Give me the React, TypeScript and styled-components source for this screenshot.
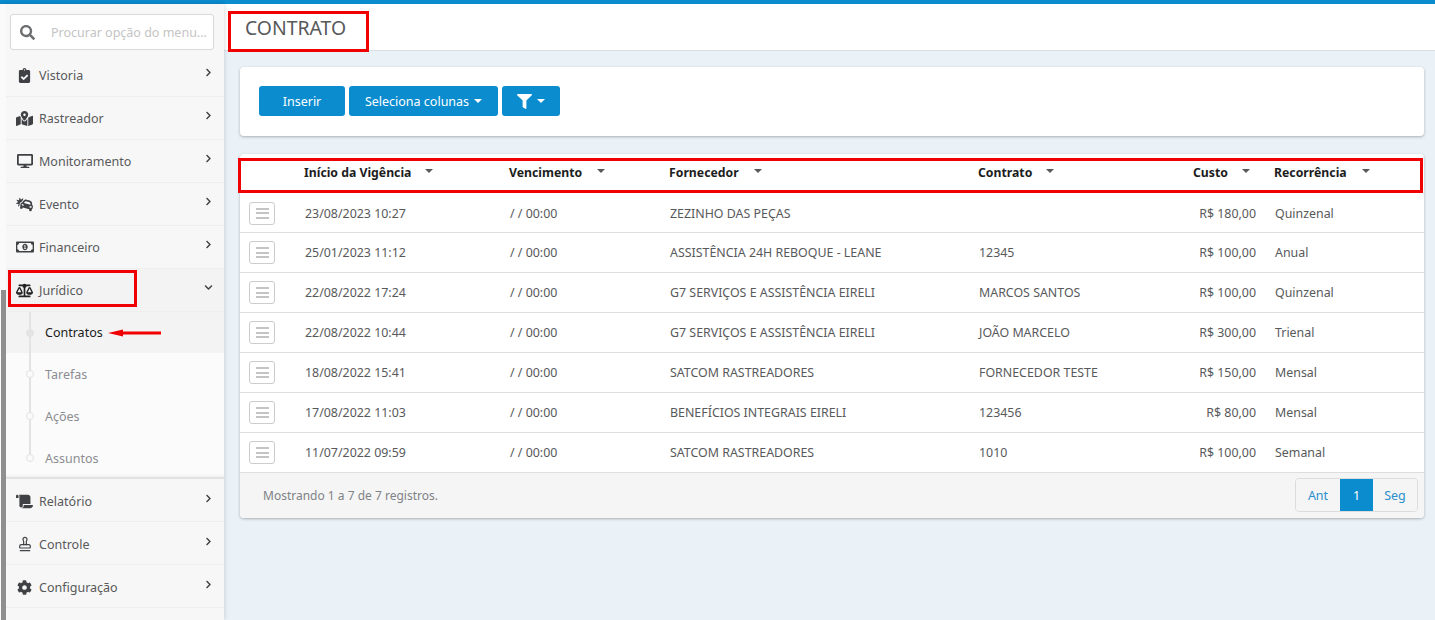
import styled, { createGlobalStyle } from "styled-components";
import { Stamp } from "lucide-react";
import {
    FaBalanceScale,
    FaCarCrash,
    FaChevronDown,
    FaChevronRight,
    FaClipboardCheck,
    FaCog,
    FaDesktop,
    FaFilter,
    FaMapMarkedAlt,
    FaRegMoneyBillAlt,
    FaScroll,
    FaSearch,
} from "react-icons/fa";
import type { ReactNode } from "react";

const GlobalStyle = createGlobalStyle`
    html, body {
        margin: 0;
        height: 100%;
        overflow: hidden;
        background: #eaf2f8;
    }
    * {
        box-sizing: border-box;
    }
    body {
        font-family: "Noto Sans", "Open Sans", sans-serif;
        font-size: 12px;
        color: #58595b;
    }
`;

const rows = [
    ["23/08/2023 10:27", "/ / 00:00", "ZEZINHO DAS PEÇAS", "", "R$ 180,00", "Quinzenal"],
    ["25/01/2023 11:12", "/ / 00:00", "ASSISTÊNCIA 24H REBOQUE - LEANE", "12345", "R$ 100,00", "Anual"],
    ["22/08/2022 17:24", "/ / 00:00", "G7 SERVIÇOS E ASSISTÊNCIA EIRELI", "MARCOS SANTOS", "R$ 100,00", "Quinzenal"],
    ["22/08/2022 10:44", "/ / 00:00", "G7 SERVIÇOS E ASSISTÊNCIA EIRELI", "JOÃO MARCELO", "R$ 300,00", "Trienal"],
    ["18/08/2022 15:41", "/ / 00:00", "SATCOM RASTREADORES", "FORNECEDOR TESTE", "R$ 150,00", "Mensal"],
    ["17/08/2022 11:03", "/ / 00:00", "BENEFÍCIOS INTEGRAIS EIRELI", "123456", "R$ 80,00", "Mensal"],
    ["11/07/2022 09:59", "/ / 00:00", "SATCOM RASTREADORES", "1010", "R$ 100,00", "Semanal"],
];

const topItems: [string, ReactNode][] = [
    ["Vistoria", <FaClipboardCheck size={15} />],
    ["Rastreador", <FaMapMarkedAlt size={17} />],
    ["Monitoramento", <FaDesktop size={16} />],
    ["Evento", <FaCarCrash size={17} />],
    ["Financeiro", <FaRegMoneyBillAlt size={18} />],
];

const bottomItems: [string, ReactNode][] = [
    ["Relatório", <FaScroll size={17} />],
    ["Controle", <Stamp size={16} strokeWidth={1.8} />],
    ["Configuração", <FaCog size={15} />],
];

const subItems = ["Contratos", "Tarefas", "Ações", "Assuntos"];

const heads: { label: string; caret: number; inset?: number }[] = [
    { label: "Início da Vigência", caret: 121 },
    { label: "Vencimento", caret: 88 },
    { label: "Fornecedor", caret: 85 },
    { label: "Contrato", caret: 68 },
    { label: "Custo", caret: 92, inset: 43 },
    { label: "Recorrência", caret: 88 },
];

export default function App() {
    return (
        <Page>
            <GlobalStyle />
            <TopLine />
            <Body>
                <Sidebar>
                    <ScrollTrack>
                        <ScrollThumb />
                    </ScrollTrack>
                    <SideInner>
                        <SearchWrap>
                            <SearchBox>
                                <FaSearch size={15} color="#6d6e70" />
                                <span>Procurar opção do menu...</span>
                            </SearchBox>
                        </SearchWrap>
                        {topItems.map(([label, icon]) => (
                            <MenuItem key={label}>
                                <MenuIcon>{icon}</MenuIcon>
                                <MenuLabel>{label}</MenuLabel>
                                <Chevron><FaChevronRight size={9} /></Chevron>
                            </MenuItem>
                        ))}
                        <MenuItem $open>
                            <MenuIcon><FaBalanceScale size={17} color="#222" /></MenuIcon>
                            <MenuLabel>Jurídico</MenuLabel>
                            <Chevron><FaChevronDown size={9} /></Chevron>
                            <RedBox $w={129} $h={37} $l={2} $t={1} />
                        </MenuItem>
                        <SubMenu>
                            <SubLine />
                            {subItems.map((label, i) => (
                                <SubItem key={label} $active={i === 0}>
                                    <SubDot $active={i === 0} />
                                    {label}
                                    {i === 0 && (
                                        <ArrowMark width="54" height="8" viewBox="0 0 54 8">
                                            <path d="M0 4 L15 0.5 L15 2.5 L53 2.5 L53 5.5 L15 5.5 L15 7.5 Z" fill="#f00000" />
                                        </ArrowMark>
                                    )}
                                </SubItem>
                            ))}
                        </SubMenu>
                        {bottomItems.map(([label, icon]) => (
                            <MenuItem key={label} $low>
                                <MenuIcon>{icon}</MenuIcon>
                                <MenuLabel>{label}</MenuLabel>
                                <Chevron><FaChevronRight size={9} /></Chevron>
                            </MenuItem>
                        ))}
                    </SideInner>
                </Sidebar>
                <Main>
                    <Header>
                        <Title>CONTRATO</Title>
                        <RedBox $w={141} $h={41} $l={4} $t={7} />
                    </Header>
                    <Content>
                        <ToolCard>
                            <Button $w={86}>Inserir</Button>
                            <Button $w={149}>Seleciona colunas <Caret /></Button>
                            <Button $w={58}><FaFilter size={15} /> <Caret /></Button>
                        </ToolCard>
                        <TableCard>
                            <HeadRow>
                                <span />
                                {heads.map((h) => (
                                    <HeadCell key={h.label} $inset={h.inset}>
                                        {h.label}
                                        <HeadCaret $l={h.caret} />
                                    </HeadCell>
                                ))}
                                <RedBox $w={1185} $h={35} $l={-2} $t={4} />
                            </HeadRow>
                            {rows.map((r, i) => (
                                <DataRow key={i} $first={i === 0}>
                                    <MenuCell>
                                        <RowMenu><RowBars /></RowMenu>
                                    </MenuCell>
                                    <Cell>{r[0]}</Cell>
                                    <Cell>{r[1]}</Cell>
                                    <Cell>{r[2]}</Cell>
                                    <Cell>{r[3]}</Cell>
                                    <Cell $right>{r[4]}</Cell>
                                    <Cell $pad>{r[5]}</Cell>
                                </DataRow>
                            ))}
                            <Footer>
                                <span>Mostrando 1 a 7 de 7 registros.</span>
                                <Pager>
                                    <PageLink $w={44}>Ant</PageLink>
                                    <PageLink $w={33} $active>1</PageLink>
                                    <PageLink $w={44}>Seg</PageLink>
                                </Pager>
                            </Footer>
                        </TableCard>
                    </Content>
                </Main>
            </Body>
        </Page>
    );
}

const Page = styled.div`
    width: 1435px;
    height: 620px;
    display: flex;
    flex-direction: column;
    overflow: hidden;
`;

const TopLine = styled.div`
    height: 4px;
    flex: none;
    background: #0a8ccf;
`;

const Body = styled.div`
    flex: 1;
    display: flex;
    min-height: 0;
`;

const Sidebar = styled.aside`
    width: 224px;
    flex: none;
    display: flex;
    background: #f7f7f7;
    box-shadow: 0 0 5px rgba(0, 0, 0, 0.18);
    z-index: 1;
`;

const ScrollTrack = styled.div`
    width: 6px;
    flex: none;
    display: flex;
    flex-direction: column;
    justify-content: flex-end;
    padding-left: 1px;
    background: #fafafa;
`;

const ScrollThumb = styled.div`
    width: 5px;
    height: 330px;
    background: #8f8f8f;
`;

const SideInner = styled.div`
    flex: 1;
    min-width: 0;
`;

const SearchWrap = styled.div`
    height: 50px;
    padding: 10px 10px 0 4px;
    background: #f7f7f7;
`;

const SearchBox = styled.div`
    height: 36px;
    display: flex;
    align-items: center;
    gap: 16px;
    padding: 0 0 0 9px;
    background: #fff;
    border: 1px solid #d9d9d9;
    border-radius: 3px;
    color: #c4c4c4;
    font-size: 12.5px;
    white-space: nowrap;
    overflow: hidden;

    svg {
        flex: none;
    }
`;

const MenuItem = styled.div<{ $open?: boolean; $low?: boolean }>`
    position: relative;
    height: 43px;
    display: flex;
    align-items: center;
    padding: ${(p) => (p.$low ? "2px" : "0")} 10px 0 7px;
    border-bottom: 1px solid #efefef;
    background: ${(p) => (p.$open ? "#f3f3f3" : "#f7f7f7")};
`;

const MenuIcon = styled.span`
    width: 23px;
    display: flex;
    justify-content: center;
    color: #3f4144;
    margin-right: 3px;
`;

const MenuLabel = styled.span`
    flex: 1;
    font-size: 12.5px;
    color: #58595b;
`;

const Chevron = styled.span`
    display: flex;
    color: #3f4144;
    margin: 0 1px 6px 0;
`;

const SubMenu = styled.div`
    position: relative;
    height: 167px;
    background: #fbfbfb;
    border-bottom: 2px solid #e2e2e2;
    box-shadow: inset 0 -3px 3px -2px rgba(0, 0, 0, 0.06);
`;

const SubLine = styled.div`
    position: absolute;
    left: 23px;
    top: 0;
    bottom: 20px;
    width: 2px;
    background: #e3e3e3;
    z-index: 1;
`;

const SubItem = styled.div<{ $active?: boolean }>`
    position: relative;
    height: ${(p) => (p.$active ? "41px" : "42px")};
    display: flex;
    align-items: center;
    padding-left: 39px;
    font-size: 12.5px;
    color: ${(p) => (p.$active ? "#1c1c1c" : "#8b8d91")};
    background: ${(p) => (p.$active ? "#f3f3f3" : "transparent")};
`;

const SubDot = styled.span<{ $active?: boolean }>`
    position: absolute;
    left: 20px;
    top: 17px;
    width: 8px;
    height: 8px;
    border-radius: 50%;
    border: 1px solid #e3e3e3;
    background: ${(p) => (p.$active ? "#e3e3e3" : "#fbfbfb")};
    z-index: 2;
`;

const ArrowMark = styled.svg`
    position: absolute;
    left: 102px;
    top: 17px;
`;

const RedBox = styled.div<{ $w: number; $h: number; $l: number; $t: number }>`
    position: absolute;
    left: ${(p) => p.$l}px;
    top: ${(p) => p.$t}px;
    width: ${(p) => p.$w}px;
    height: ${(p) => p.$h}px;
    border: 3px solid #f00000;
    pointer-events: none;
`;

const Main = styled.main`
    flex: 1;
    min-width: 0;
`;

const Header = styled.header`
    position: relative;
    height: 47px;
    display: flex;
    align-items: center;
    padding: 0 0 0 21px;
    background: #fff;
    border-bottom: 1px solid #dcdfe2;
`;

const Title = styled.h1`
    margin: 0;
    font-size: 19.4px;
    font-weight: 400;
    color: #58595b;
`;

const Content = styled.div`
    padding: 16px 11px 0 16px;
`;

const ToolCard = styled.section`
    height: 69px;
    display: flex;
    align-items: center;
    gap: 4px;
    padding: 0 19px 1px;
    background: #fff;
    border-radius: 4px;
    box-shadow: 0 1px 3px rgba(0, 0, 0, 0.28);
`;

const Button = styled.button<{ $w: number }>`
    width: ${(p) => p.$w}px;
    height: 30px;
    display: flex;
    align-items: center;
    justify-content: center;
    gap: 5px;
    border: 0;
    border-radius: 3px;
    background: #0a8ccf;
    color: #fff;
    font: inherit;
    font-size: 12.5px;
`;

const Caret = styled.span`
    width: 0;
    height: 0;
    border-left: 4px solid transparent;
    border-right: 4px solid transparent;
    border-top: 4px solid #fff;
`;

const TableCard = styled.section`
    margin-top: 18px;
    background: #fff;
    border-radius: 4px;
    box-shadow: 0 1px 3px rgba(0, 0, 0, 0.28);
`;

const HeadRow = styled.div`
    position: relative;
    height: 40px;
    display: grid;
    grid-template-columns: 64px 205px 160px 309px 172px 124px 1fr;
    align-items: center;
`;

const HeadCell = styled.div<{ $inset?: number }>`
    position: relative;
    padding-left: ${(p) => p.$inset ?? 0}px;
    padding-bottom: 4px;
    font-size: 12.25px;
    font-weight: 700;
    color: #1d1d1d;
    white-space: nowrap;
`;

const HeadCaret = styled.span<{ $l: number }>`
    position: absolute;
    left: ${(p) => p.$l}px;
    top: 5px;
    width: 0;
    height: 0;
    border-left: 4px solid transparent;
    border-right: 4px solid transparent;
    border-top: 4px solid #58595b;
`;

const DataRow = styled.div<{ $first?: boolean }>`
    height: ${(p) => (p.$first ? "39px" : "40px")};
    display: grid;
    grid-template-columns: 64px 205px 160px 309px 172px 106px 1fr;
    align-items: center;
    border-bottom: 1px solid #dedede;
`;

const MenuCell = styled.div`
    padding-left: 9px;
`;

const RowMenu = styled.div`
    width: 26px;
    height: 23px;
    display: flex;
    align-items: center;
    justify-content: center;
    border: 1px solid #ccc;
    border-radius: 3px;
    background: #fff;
`;

const RowBars = styled.span`
    width: 13px;
    height: 11px;
    border-top: 2px solid #c4c4c4;
    border-bottom: 2px solid #c4c4c4;
    background: linear-gradient(#c4c4c4, #c4c4c4) center / 100% 2px no-repeat;
`;

const Cell = styled.div<{ $right?: boolean; $pad?: boolean }>`
    padding-left: ${(p) => (p.$pad ? "19px" : "1px")};
    text-align: ${(p) => (p.$right ? "right" : "left")};
    font-size: 12.4px;
    color: #58595b;
    white-space: nowrap;
`;

const Footer = styled.footer`
    height: 45px;
    display: flex;
    align-items: center;
    justify-content: space-between;
    padding: 0 6px 1px 23px;
    background: #f5f5f5;
    border-radius: 0 0 4px 4px;
    color: #808285;
    font-size: 12px;
`;

const Pager = styled.nav`
    display: flex;
    height: 34px;
    border: 1px solid #dcdcdc;
    border-radius: 4px;
    overflow: hidden;
`;

const PageLink = styled.span<{ $w: number; $active?: boolean }>`
    width: ${(p) => p.$w}px;
    display: flex;
    align-items: center;
    justify-content: center;
    background: ${(p) => (p.$active ? "#0a8ccf" : "#f5f5f5")};
    color: ${(p) => (p.$active ? "#fff" : "#2c8fce")};
    font-size: 12.5px;
`;
